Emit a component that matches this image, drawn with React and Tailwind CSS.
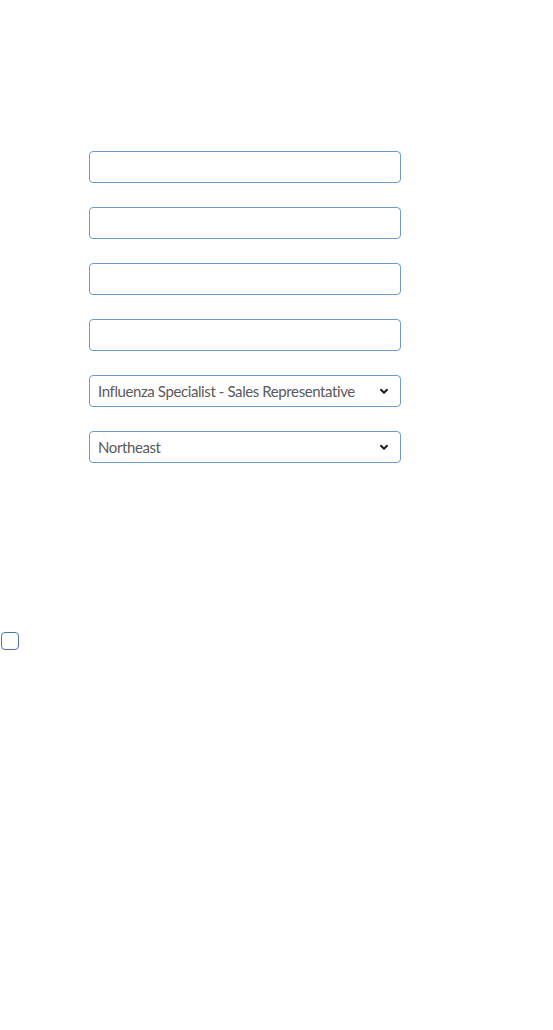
import React from 'react';

const Chevron = () => (
  <svg width="10" height="7" viewBox="0 0 10 7" className="absolute right-[12px] top-[13px] pointer-events-none">
    <path d="M2 1.8 L5 4.8 L8 1.8" fill="none" stroke="#222" strokeWidth="2" strokeLinecap="round" strokeLinejoin="round" />
  </svg>
);

const Field = () => (
  <input
    type="text"
    className="w-full h-8 rounded-[4px] border border-[#6b9bd1] bg-white px-2 outline-none"
  />
);

const Select = ({ value }) => (
  <div className="relative w-full h-8">
    <div className="w-full h-8 rounded-[4px] border border-[#6b9bd1] bg-white pl-2 flex items-center text-[15px] tracking-[-0.4px] text-[#5a5a5a] font-['Lato',sans-serif]">
      {value}
    </div>
    <Chevron />
  </div>
);

export default function App() {
  return (
    <div className="w-[553px] h-[1030px] bg-white font-['Lato',sans-serif]">
      <div className="pt-[151px] pl-[89px] w-[401px] flex flex-col gap-6">
        <Field />
        <Field />
        <Field />
        <Field />
        <Select value="Influenza Specialist - Sales Representative" />
        <Select value="Northeast" />
      </div>
      <div className="mt-[169px] pl-[1px]">
        <div className="w-[18px] h-[18px] rounded-[4px] border border-[#4a74b5] bg-white" />
      </div>
    </div>
  );
}
